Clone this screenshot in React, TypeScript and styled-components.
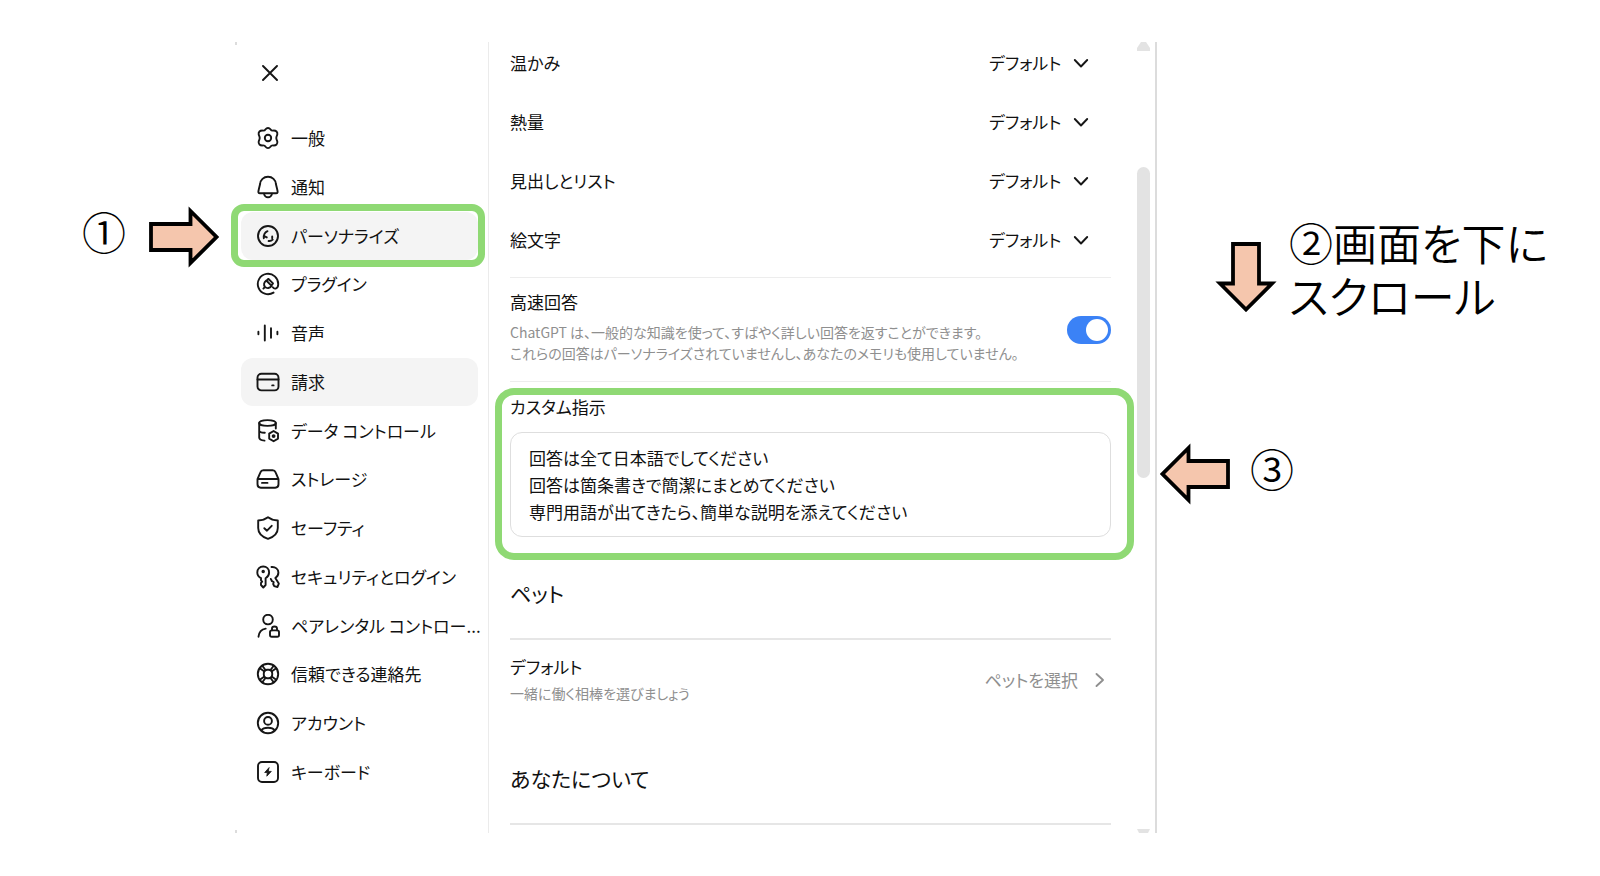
import React from "react";
import styled, { createGlobalStyle } from "styled-components";

const GlobalStyle = createGlobalStyle`
  * { box-sizing: border-box; }
  body {
    margin: 0;
    background: #fff;
    color: #111;
    font-family: "Noto Sans CJK JP", sans-serif;
    font-feature-settings: "palt";
    font-kerning: normal;
  }
  h2, h3, p, ul { margin: 0; padding: 0; font-weight: 400; }
  button, select, textarea, input { font: inherit; color: inherit; font-feature-settings: inherit; margin: 0; }
`;

const GREEN = "#8fd974";

const Slide = styled.main`
  display: grid;
  grid-template-columns: minmax(0, 235fr) minmax(0, 922fr) minmax(0, 443fr);
  padding: 42px 0;
`;

/* ---------- annotations ---------- */

const LeftNotes = styled.aside`
  display: flex;
  justify-content: flex-end;
  align-items: center;
  align-self: start;
  gap: 23px;
  padding: 153px 16px 0 0;
`;

const RightNotes = styled.aside`
  display: flex;
  flex-direction: column;
  align-items: flex-start;
  padding-top: 174px;
`;

const Note = styled.div<{ $indent: number; $gap: number }>`
  display: flex;
  align-items: center;
  gap: ${(p) => p.$gap}px;
  padding-left: ${(p) => p.$indent}px;
  white-space: nowrap;

  & + & { margin-top: 110px; }
`;

const NoteText = styled.p`
  font-family: "Noto Sans CJK JP DemiLight", "Noto Sans CJK JP", sans-serif;
  font-size: 44px;
  font-weight: 350;
  line-height: 53px;
  color: #000;
`;

const ArrowSlot = styled.span<{ $down?: boolean }>`
  display: grid;
  place-items: center;
  flex: none;
  width: ${(p) => (p.$down ? 62 : 70)}px;
  height: ${(p) => (p.$down ? 70 : 62)}px;
  margin-top: ${(p) => (p.$down ? 16 : 11)}px;
`;

const ArrowSvg = styled.svg<{ $turn: number }>`
  display: block;
  transform: rotate(${(p) => p.$turn}deg);
`;

const Arrow = ({ turn = 0 }: { turn?: number }) => (
  <ArrowSlot $down={turn === 90}>
    <ArrowSvg $turn={turn} width="70" height="62" viewBox="0 0 70 62" aria-hidden="true">
      <path d="M2 18H41.500V5L67.500 31L41.500 57V44H2Z" fill="#f5c6ad" stroke="#000" strokeWidth="3.800" />
    </ArrowSvg>
  </ArrowSlot>
);

/* ---------- panel ---------- */

const Panel = styled.section`
  position: relative;
  display: flex;
  border-right: 2px solid #dcdcdc;

  &::before, &::after {
    content: "";
    position: absolute;
    left: 0;
    width: 2px;
    height: 3px;
    background: #dcdcdc;
  }
  &::before { top: 0; }
  &::after { bottom: 0; }
`;

const Sidebar = styled.nav`
  display: flex;
  flex-direction: column;
  flex: 0 0 254px;
  min-width: 0;
  padding: 16px 10px 37px 6px;
  border-right: 1px solid #ebebeb;
`;

const CloseButton = styled.button`
  display: grid;
  place-items: center;
  width: 30px;
  height: 30px;
  margin: 0 0 26px 14px;
  padding: 0;
  border: 0;
  background: none;
`;

const NavList = styled.ul`
  display: flex;
  flex: 1;
  flex-direction: column;
  justify-content: space-between;
  list-style: none;
`;

const NavItem = styled.li`
  position: relative;
`;

const NavButton = styled.button<{ $filled: boolean }>`
  display: flex;
  align-items: center;
  gap: 11px;
  width: 100%;
  height: 48px;
  padding: 0 0 0 15px;
  border: 0;
  border-radius: 12px;
  background: ${(p) => (p.$filled ? "#f4f4f4" : "transparent")};
  font-size: 17px;
  line-height: 24px;
  text-align: left;
  white-space: nowrap;
`;

const NavHighlight = styled.span`
  position: absolute;
  inset: -8px -7px -7px -10px;
  border: 7px solid ${GREEN};
  border-radius: 13px;
  pointer-events: none;
`;

const Content = styled.div`
  flex: 1;
  min-width: 0;
  padding: 0 26px 8px 21px;
`;

const StyleRows = styled.div`
  margin-top: -9px;
  padding-bottom: 8px;
  border-bottom: 1px solid #ededed;
`;

const StyleRow = styled.div`
  display: flex;
  align-items: center;
  justify-content: space-between;
  height: 59px;
  padding-right: 20px;
  font-size: 17px;
  line-height: 24px;
`;

const SelectWrap = styled.span`
  position: relative;
  display: flex;
  align-items: center;
`;

const Select = styled.select`
  appearance: none;
  height: 36px;
  padding: 0 29px 0 0;
  border: 0;
  background: none;
`;

const SelectChevron = styled.span`
  position: absolute;
  right: 0;
  display: flex;
  pointer-events: none;
`;

const FastAnswers = styled.div`
  display: flex;
  align-items: center;
  justify-content: space-between;
  padding: 12px 0 17px;
  border-bottom: 1px solid #ededed;
`;

const ItemTitle = styled.h3`
  font-size: 17px;
  line-height: 24px;
`;

const Hint = styled.p<{ $top: number }>`
  margin-top: ${(p) => p.$top}px;
  color: #8f8f8f;
  font-size: 14px;
  line-height: 21px;
  white-space: nowrap;
`;

const Toggle = styled.input`
  appearance: none;
  flex: none;
  width: 44px;
  height: 28px;
  padding: 3px;
  border-radius: 14px;
  background: #3b82f6;

  && { margin-top: 5px; }

  &::before {
    content: "";
    display: block;
    width: 22px;
    height: 22px;
    margin-left: auto;
    border-radius: 50%;
    background: #fff;
  }
`;

const Custom = styled.div`
  position: relative;
  padding-top: 13px;
`;

const CustomLabel = styled.label`
  display: block;
  margin-bottom: 13px;
  font-size: 17px;
  line-height: 24px;
`;

const CustomText = styled.textarea`
  display: block;
  width: 100%;
  height: 105px;
  padding: 11px 18px;
  border: 1px solid #dedede;
  border-radius: 12px;
  background: #fff;
  font-size: 17px;
  line-height: 27px;
  resize: none;
  overflow: hidden;
`;

const CustomHighlight = styled.span`
  position: absolute;
  inset: 6px -23px -23px -15px;
  border: 7px solid ${GREEN};
  border-radius: 19px;
  pointer-events: none;
`;

const SectionTitle = styled.h2<{ $top: number }>`
  padding: ${(p) => p.$top}px 0 31px;
  border-bottom: 2px solid #e6e6e6;
  font-size: 21px;
  line-height: 28px;
`;

const PetRow = styled.div`
  display: flex;
  align-items: center;
  justify-content: space-between;
  padding-top: 15px;
`;

const PetButton = styled.button`
  display: flex;
  align-items: center;
  gap: 17px;
  padding: 0 6px 0 0;
  border: 0;
  background: none;
  color: #8f8f8f;
  font-size: 17px;
  line-height: 24px;
`;

const Scrollbar = styled.div`
  display: flex;
  flex-direction: column;
  flex: 0 0 13px;
  margin-right: 5px;
`;

const Thumb = styled.div`
  flex: 0 0 311px;
  margin: 116px 0 auto;
  border-radius: 7px;
  background: #e3e3e3;
`;

/* ---------- icons ---------- */

const IconSvg = styled.svg<{ $muted?: boolean }>`
  display: block;
  flex: none;
  fill: none;
  stroke: ${(p) => (p.$muted ? "#8f8f8f" : "#161616")};
  stroke-width: 1.9;
  stroke-linecap: round;
  stroke-linejoin: round;
`;

const Icon = ({ children }: { children: React.ReactNode }) => (
  <IconSvg width="24" height="24" viewBox="0 0 24 24" aria-hidden="true">
    {children}
  </IconSvg>
);

const icons = {
  gear: (
    <Icon>
      <path d="M9.600 3.200C10.800 1.500 13.200 1.500 14.400 3.200C15 4.200 15.700 4.700 17 4.600C20.200 4.300 21.800 6.100 21.300 8.500C21.100 9.500 20.300 10.300 20.300 12C20.300 13.700 21.100 14.500 21.300 15.500C21.800 17.900 20.200 19.700 17 19.400C15.700 19.300 15 19.800 14.400 20.800C13.200 22.500 10.800 22.500 9.600 20.800C9 19.800 8.300 19.300 7 19.400C3.800 19.700 2.200 17.900 2.700 15.500C2.900 14.500 3.700 13.700 3.700 12C3.700 10.300 2.900 9.500 2.700 8.500C2.200 6.100 3.800 4.300 7 4.600C8.300 4.700 9 4.200 9.600 3.200Z" />
      <circle cx="12" cy="12" r="3.200" />
    </Icon>
  ),
  bell: (
    <Icon>
      <path d="M12 1.800C7.500 1.800 4.400 5 4.100 9L3 13.500C2.400 16 1.600 18.300 3.800 18.300H20.200C22.400 18.300 21.600 16 21 13.500L19.900 9C19.600 5 16.500 1.800 12 1.800Z" />
      <path d="M8 18.600C8.500 20.900 10 22.300 12 22.300S15.500 20.900 16 18.600" />
    </Icon>
  ),
  personalize: (
    <Icon>
      <circle cx="12" cy="12" r="10" />
      <path d="M11.500 7.200C8.800 8.500 7.500 11 7.800 14.200M8.200 12L10.800 13.400M16.200 12.500V14.300M12.600 17C14.200 17.200 15.800 16.600 16.700 15.700" />
    </Icon>
  ),
  plugin: (
    <Icon>
      <path d="M17.500 20.600A10.200 10.200 0 1 1 22.200 12.500C22.100 16.800 18.500 17.600 16.800 15.300" />
      <path d="M7.400 16.600L9 14.900M9 14.900C7.300 12.800 7.900 10.400 10.300 8.500L15.600 13.900C13.600 16.400 11 16.800 9 14.900ZM12.200 7L10.500 8.700M12.500 7L17 11.400L15.300 13.700" />
    </Icon>
  ),
  voice: (
    <Icon>
      <path d="M2.400 10.700V13.300M8.800 4.400V19.600M15 7.200V16.800M21.400 10.700V13.300" />
    </Icon>
  ),
  card: (
    <Icon>
      <rect x="1.500" y="3.800" width="21" height="16.600" rx="4" />
      <path d="M1.500 9.500H22.500M16.200 15.400H17.600" />
    </Icon>
  ),
  data: (
    <Icon>
      <ellipse cx="11.500" cy="4" rx="8.300" ry="2.900" />
      <path d="M3.200 4V18.500C3.200 20.200 5 21.300 8.500 21.600M19.800 4V9.500M3.200 11.400C3.200 12.700 5.500 13.600 8.800 13.800" />
      <path d="M17.600 12L22 14.600V19.600L17.600 22.200L13.200 19.600V14.600Z" />
      <circle cx="17.600" cy="17.100" r="1" />
    </Icon>
  ),
  storage: (
    <Icon>
      <path d="M1.500 12.200L4.400 5.400C4.900 4.100 6 3.300 7.400 3.300H16.600C18 3.300 19.100 4.100 19.600 5.400L22.500 12.200V17.300C22.500 19.600 21.400 20.700 19.200 20.700H4.800C2.600 20.700 1.500 19.600 1.500 17.300ZM2 12H22M6 15.900H11.500" />
    </Icon>
  ),
  shield: (
    <Icon>
      <path d="M12 1.300C14.800 3.500 17.700 4.300 21.800 4.500V12C21.800 17 18 20.900 12 22.900C6 20.900 2.200 17 2.200 12V4.500C6.300 4.300 9.200 3.500 12 1.300ZM8.300 12.200L11 14.700L15.700 9.800" />
    </Icon>
  ),
  keys: (
    <Icon>
      <path d="M5 13.200C2.800 12 1.300 10.200 1.300 7.500C1.300 4 3.800 1.500 7.200 1.500S13.100 4 13.100 7.500C13.100 10.200 11.600 12 9.600 13.200V20L7.300 22.500L5 20V17.800L6.200 16.600L5 15.300Z" />
      <circle cx="7.200" cy="6.600" r="0.800" />
      <path d="M15.500 2C19.500 1.600 22.400 4.200 22.400 7.500C22.400 10 21.300 11.800 19.300 13L22.800 18.600L21.500 22L18.200 21.200L17.200 19L17.700 17L16 16.200L14.800 13.900" />
    </Icon>
  ),
  parental: (
    <Icon>
      <circle cx="12" cy="5.600" r="4.800" />
      <path d="M2.500 22.700C3 18 5.600 15.200 9.700 14.600" />
      <rect x="14" y="16.400" width="9" height="6.400" rx="1.800" />
      <path d="M16 16.200V14.600C16 11.800 21 11.800 21 14.600V16.200" />
    </Icon>
  ),
  lifebuoy: (
    <Icon>
      <circle cx="12" cy="12" r="10.200" />
      <rect x="7.800" y="7.800" width="8.400" height="8.400" rx="3.300" />
      <path d="M3.800 6.200L8.400 9.500M6.300 3.700L9.700 8.200M20.200 6.200L15.600 9.500M17.700 3.700L14.300 8.200M3.800 17.800L8.400 14.500M6.300 20.300L9.700 15.800M20.200 17.800L15.600 14.500M17.700 20.300L14.300 15.800" />
    </Icon>
  ),
  account: (
    <Icon>
      <circle cx="12" cy="12" r="10.200" />
      <circle cx="12" cy="9.900" r="3.900" />
      <path d="M5.300 19.400C7 16.800 9.500 16.800 12 16.800S17 16.800 18.700 19.400" />
    </Icon>
  ),
  keyboard: (
    <Icon>
      <rect x="2" y="2" width="20" height="20" rx="4" />
      <path d="M12.900 7.800L8.700 12.500H11.300L10.800 16.200L15.300 11.400H12.500Z" fill="#161616" strokeWidth="0.800" />
    </Icon>
  ),
};

const navItems: { icon: keyof typeof icons; label: string; filled?: boolean; marked?: boolean }[] = [
  { icon: "gear", label: "一般" },
  { icon: "bell", label: "通知" },
  { icon: "personalize", label: "パーソナライズ", filled: true, marked: true },
  { icon: "plugin", label: "プラグイン" },
  { icon: "voice", label: "音声" },
  { icon: "card", label: "請求", filled: true },
  { icon: "data", label: "データ コントロール" },
  { icon: "storage", label: "ストレージ" },
  { icon: "shield", label: "セーフティ" },
  { icon: "keys", label: "セキュリティとログイン" },
  { icon: "parental", label: "ペアレンタル コントロー..." },
  { icon: "lifebuoy", label: "信頼できる連絡先" },
  { icon: "account", label: "アカウント" },
  { icon: "keyboard", label: "キーボード" },
];

const styleRows = ["温かみ", "熱量", "見出しとリスト", "絵文字"];

const instructions = [
  "回答は全て日本語でしてください",
  "回答は箇条書きで簡潔にまとめてください",
  "専門用語が出てきたら、簡単な説明を添えてください",
].join("\n");

export default function App() {
  return (
    <>
      <GlobalStyle />
      <Slide>
        <LeftNotes>
          <NoteText>①</NoteText>
          <Arrow />
        </LeftNotes>

        <Panel aria-label="設定">
          <Sidebar>
            <CloseButton aria-label="閉じる">
              <IconSvg width="16" height="16" viewBox="0 0 16 16" aria-hidden="true">
                <path d="M1 1L15 15M15 1L1 15" />
              </IconSvg>
            </CloseButton>
            <NavList>
              {navItems.map((item) => (
                <NavItem key={item.label}>
                  <NavButton $filled={!!item.filled}>
                    {icons[item.icon]}
                    {item.label}
                  </NavButton>
                  {item.marked && <NavHighlight />}
                </NavItem>
              ))}
            </NavList>
          </Sidebar>

          <Content>
            <StyleRows>
              {styleRows.map((label, i) => (
                <StyleRow key={label}>
                  <label htmlFor={`style-${i}`}>{label}</label>
                  <SelectWrap>
                    <Select id={`style-${i}`}>
                      <option>デフォルト</option>
                    </Select>
                    <SelectChevron>
                      <IconSvg width="20" height="16" viewBox="0 0 20 16" aria-hidden="true">
                        <path d="M3.800 5L10 11.500L16.200 5" />
                      </IconSvg>
                    </SelectChevron>
                  </SelectWrap>
                </StyleRow>
              ))}
            </StyleRows>

            <FastAnswers>
              <div>
                <ItemTitle as="label" htmlFor="fast">高速回答</ItemTitle>
                <Hint $top={8}>
                  ChatGPT は、一般的な知識を使って、すばやく詳しい回答を返すことができます。
                  <br />
                  これらの回答はパーソナライズされていませんし、あなたのメモリも使用していません。
                </Hint>
              </div>
              <Toggle id="fast" type="checkbox" role="switch" defaultChecked />
            </FastAnswers>

            <Custom>
              <CustomLabel htmlFor="custom">カスタム指示</CustomLabel>
              <CustomText id="custom" defaultValue={instructions} spellCheck={false} />
              <CustomHighlight />
            </Custom>

            <SectionTitle $top={42}>ペット</SectionTitle>
            <PetRow>
              <div>
                <ItemTitle>デフォルト</ItemTitle>
                <Hint $top={4}>一緒に働く相棒を選びましょう</Hint>
              </div>
              <PetButton>
                ペットを選択
                <IconSvg $muted width="10" height="16" viewBox="0 0 10 16" aria-hidden="true">
                  <path d="M1.500 2L8 8L1.500 14" />
                </IconSvg>
              </PetButton>
            </PetRow>

            <SectionTitle $top={60}>あなたについて</SectionTitle>
          </Content>

          <Scrollbar aria-hidden="true">
            <svg width="13" height="9" viewBox="0 0 13 9">
              <path d="M4 0H9L13 6V9H0V6Z" fill="#e3e3e3" />
            </svg>
            <Thumb />
            <svg width="13" height="4" viewBox="0 0 13 4">
              <path d="M0 0H13L11 4H2Z" fill="#e3e3e3" />
            </svg>
          </Scrollbar>
        </Panel>

        <RightNotes>
          <Note $indent={54} $gap={16}>
            <Arrow turn={90} />
            <NoteText>
              ②画面を下に
              <br />
              スクロール
            </NoteText>
          </Note>
          <Note $indent={3} $gap={20}>
            <Arrow turn={180} />
            <NoteText>③</NoteText>
          </Note>
        </RightNotes>
      </Slide>
    </>
  );
}
